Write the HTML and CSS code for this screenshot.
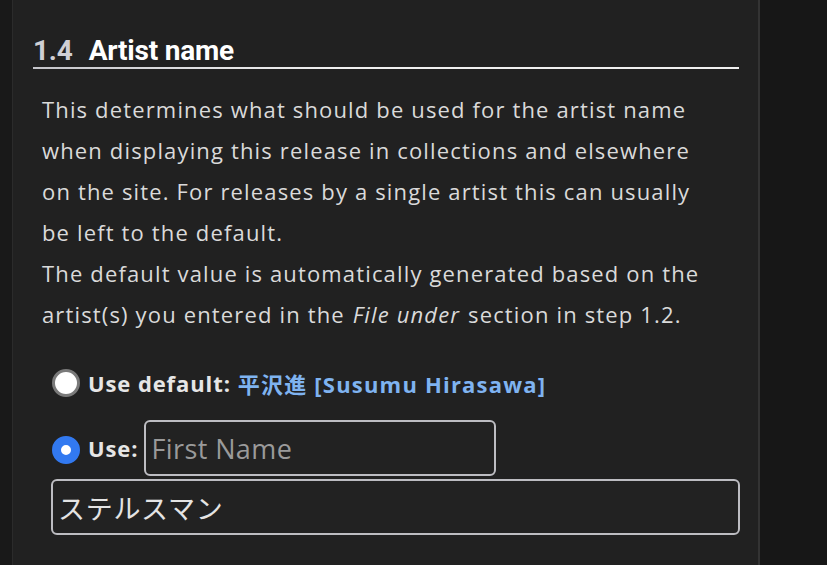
FILE: index.html
```html
<!DOCTYPE html>
<html>
<head>
<meta charset="utf-8">
<link rel="stylesheet" href="styles.css">
</head>
<body>
<div class="page">
  <div class="strip"></div>
  <main class="panel">
    <h2 class="heading"><span class="num">1.4</span><span class="title">Artist name</span></h2>
    <p class="desc">This determines what should be used for the artist name when displaying this release in collections and elsewhere on the site. For releases by a single artist this can usually be left to the default.<br>The default value is automatically generated based on the artist(s) you entered in the <em>File under</em> section in step 1.2.</p>
    <div class="opt opt-default">
      <span class="radio"></span>
      <span class="label">Use default:</span>
      <span class="artist">平沢進 [Susumu Hirasawa]</span>
    </div>
    <div class="opt opt-use">
      <span class="radio checked"></span>
      <span class="label">Use:</span>
      <input class="field first" type="text" placeholder="First Name">
    </div>
    <input class="field last" type="text" value="ステルスマン">
  </main>
  <div class="side"></div>
</div>
</body>
</html>
```

FILE: styles.css
```css
* { box-sizing: border-box; }
html, body { margin: 0; padding: 0; height: 100%; }
body {
  background: #171717;
  font-family: "Open Sans", "Noto Sans CJK JP", sans-serif;
  color: #dedede;
  overflow: hidden;
}
.page { display: flex; height: 565px; }
.strip {
  width: 13px;
  background: #191919;
  border-right: 1px solid #2b2b2b;
  flex: none;
}
.panel {
  width: 747px;
  flex: none;
  background: #212121;
  border-right: 2px solid #333333;
  padding: 35px 19px 0 20px;
}
.side { flex: 1; background: #171717; }
.heading {
  margin: 0;
  font-family: Roboto, "Noto Sans", sans-serif;
  font-weight: 700;
  font-size: 28px;
  line-height: 32px;
  letter-spacing: -0.2px;
  padding-bottom: 0;
  border-bottom: 2px solid #e8e8e8;
  border-image: linear-gradient(to right, #c4c4c9, #e2e2e4 25%, #f0f0f0 45%, #f0f0f0) 1;
  display: flex;
  gap: 16px;
}
.num { color: #cfcfd4; }
.title { color: #ffffff; }
.desc {
  margin: 20px 20px 0 9px;
  font-size: 22px;
  line-height: 41px;
  letter-spacing: 1.15px;
  color: #dadada;
}
.desc em { font-style: italic; padding: 0 1px; }
.opt {
  display: flex;
  align-items: center;
  margin-left: 18px;
}
.opt-default { margin-top: 28px; height: 40px; }
.opt-use { margin-top: 17px; height: 56px; }
.radio {
  width: 28px;
  height: 28px;
  border-radius: 50%;
  background: #ffffff;
  border: 3px solid #7a7a7a;
  flex: none;
  margin-left: 1px;
}
.opt-use .radio { margin-top: 3px; }
.radio.checked {
  background: #ffffff;
  border: 9px solid #3279f0;
}
.label {
  font-weight: 700;
  font-size: 22px;
  letter-spacing: 0.9px;
  color: #e6e6e6;
  margin-left: 8px;
}
.artist {
  font-weight: 700;
  font-size: 22px;
  letter-spacing: 1.2px;
  color: #7fb3f0;
  margin-left: 7px;
}
.field {
  background: #222222;
  border: 2px solid #bdbdc2;
  border-radius: 6px;
  height: 56px;
  font-family: "Open Sans", "Noto Sans CJK JP", sans-serif;
  font-size: 27px;
  letter-spacing: 0.4px;
  color: #e4e4e4;
  padding: 0 5px;
  outline: none;
}
.field::placeholder { color: #9a9a9a; }
.first { width: 352px; margin-left: 6px; }
.last { display: block; width: 689px; margin: 3px 0 0 18px; font-size: 27px; letter-spacing: 0.7px; }
```
